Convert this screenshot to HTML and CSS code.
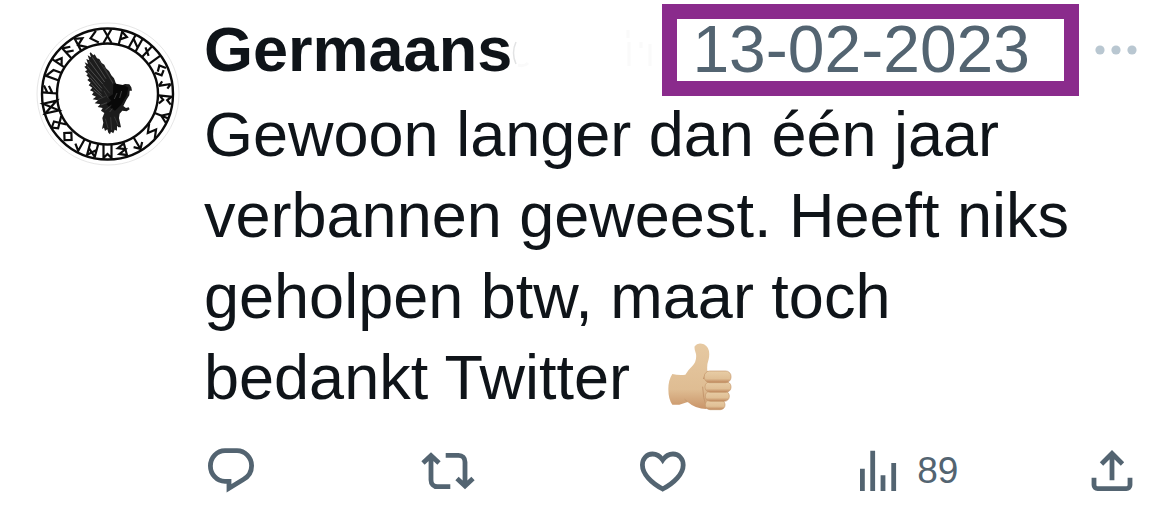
FILE: index.html
```html
<!DOCTYPE html>
<html lang="nl">
<head>
<meta charset="utf-8">
<meta name="viewport" content="width=device-width, initial-scale=1">
<title>Tweet</title>
<link rel="stylesheet" href="styles.css">
</head>
<body>
<article class="tweet">
  <svg class="avatar" viewBox="0 0 144 144" role="img" aria-label="Profielfoto">
    <circle cx="72" cy="72" r="71" fill="#fff" stroke="#e6e6e6" stroke-width="1"/>
    <g fill="none" stroke="#0b0b0b" stroke-width="2.400">
      <circle cx="71.500" cy="72" r="65.500"/>
      <circle cx="71.500" cy="72" r="50.500"/>
    </g>
    <g transform="translate(71.500 72)" fill="none" stroke="#0b0b0b" stroke-width="2.200">
      <path d="M-4-65L4-51M4-65L-4-51"/>
      <path transform="rotate(15)" d="M-2-65V-51M-2-64L4-60-2-56"/>
      <path transform="rotate(29)" d="M-4-65V-51M4-65V-51M-4-61L4-55"/>
      <path transform="rotate(43)" d="M0-65V-51M-4-60L4-56"/>
      <path transform="rotate(54)" d="M0-65V-51"/>
      <path transform="rotate(66)" d="M0-64L-5-59 0-55M1-61L5-57 0-52"/>
      <path transform="rotate(81)" d="M0-64V-52M0-64L4-60M0-52L-4-56"/>
      <path transform="rotate(96)" d="M-4-65V-51M-4-64L0-60 4-64M-4-52L0-56 4-52"/>
      <path transform="rotate(112)" d="M0-65V-51M-5-65L0-58 5-65"/>
      <path transform="rotate(130)" d="M4-65L-4-60 4-56-4-51"/>
      <path transform="rotate(149)" d="M0-65V-51M-5-59L0-64 5-59"/>
      <path transform="rotate(165)" d="M-3-65V-51M-3-64L4-61-3-58 4-55-3-52"/>
      <path transform="rotate(180)" d="M-4-65V-51M4-65V-51M-4-64L0-60 4-64"/>
      <path transform="rotate(195)" d="M-4-65V-51M4-65V-51M-4-64L4-57M4-64L-4-57"/>
      <path transform="rotate(209)" d="M-2-65V-51M-2-64L4-59"/>
      <path transform="rotate(223)" d="M0-63L5-58 0-53-5-58Z"/>
      <path transform="rotate(239)" d="M-5-51L4-60 0-65-4-60 5-51"/>
      <path transform="rotate(257)" d="M-5-65V-51L5-65V-51Z"/>
      <path transform="rotate(274)" d="M-3-65V-51M-3-60L4-64M-3-55L4-59"/>
      <path transform="rotate(290)" d="M-4-51V-64L4-59V-51"/>
      <path transform="rotate(304)" d="M-2-65V-51M-2-62L4-58-2-54"/>
      <path transform="rotate(318)" d="M-3-65V-51M-3-64L4-60M-3-59L4-55"/>
      <path transform="rotate(332)" d="M-3-65V-51M-3-64L4-61-3-57 4-51"/>
      <path transform="rotate(346)" d="M4-64L-3-58 4-52"/>
    </g>
    <g transform="translate(-6 -7) scale(.3333)">
      <path fill="#1c1c1c" d="M182 112L190 121 194 118 201 130 208 132 215 144 223 149 228 160 237 168 244 181 252 190 257 203 264 216 276 211 285 207 298 208 304 217 306 227 299 227 298 241 289 255 280 273 288 279 296 277 299 283 290 289 277 287 269 296 267 309 273 337 265 337 261 332 261 347 254 344 250 355 243 350 240 358 235 353 232 343 225 348 222 338 216 342 220 323 217 309 223 294 213 287 218 279 203 276 211 268 194 265 204 256 188 253 198 245 186 239 191 231 180 226 187 218 176 211 182 203 172 195 178 190 169 181 174 177 165 169 172 165 163 155 169 152 164 142 174 147 169 132 178 136 173 121 183 127 179 115Z"/>
      <g fill="none" stroke="#666" stroke-width="2">
        <path d="M187 127L228 191M178 139L224 201M172 154L219 208M174 171L216 220M180 188L215 229M184 207L214 239M191 225L218 247"/>
        <path stroke="#444" d="M207 137L248 203M222 155L252 211M220 211L239 235M222 227L235 250M203 254L227 244M226 311L234 339M242 307L245 346M253 305L264 330"/>
      </g>
      <path fill="#080808" d="M250 205L283 211 295 218 290 241 273 270 255 287 239 276 229 268 244 257 235 247 249 238Z"/>
      <path fill="none" stroke="#555" stroke-width="2" d="M213 270l18-7M226 285l18-14M239 291l8-10M275 228l-6 21M261 234l-8 18"/>
    </g>
  </svg>

  <div class="content">
    <header class="head">
      <span class="name">Germaans</span>
      <svg class="smudge" viewBox="0 0 150 56" preserveAspectRatio="xMinYMid meet" aria-hidden="true">
        <path d="M4 20Q-1 31 4 42" fill="none" stroke="#e2e3e4" stroke-width="1.500"/>
        <path d="M6 43q6 2 10-2M116 8v8M117 20v24M129 20v6M138 22v22" fill="none" stroke="#fafafa" stroke-width="3"/>
      </svg>
      <time class="date" datetime="2023-02-13">13-02-2023</time>
      <button class="more" type="button" aria-label="Meer">
        <svg viewBox="0 0 48 12" aria-hidden="true"><circle cx="8" cy="6" r="4.600"/><circle cx="24" cy="6" r="4.600"/><circle cx="40" cy="6" r="4.600"/></svg>
      </button>
    </header>

    <p class="text">Gewoon langer dan één jaar verbannen geweest. Heeft niks geholpen btw, maar toch bedankt Twitter <svg class="thumb" viewBox="42 38 192 202" role="img" aria-label="Duim omhoog">
      <defs>
        <linearGradient id="skin" x1="0" y1="0" x2="0" y2="1"><stop offset="0" stop-color="#e6c9a2"/><stop offset=".7" stop-color="#dfbd93"/><stop offset="1" stop-color="#c99468"/></linearGradient>
        <linearGradient id="finger" x1="0" y1="0" x2="0" y2="1"><stop offset="0" stop-color="#e8cda6"/><stop offset=".65" stop-color="#e0bf95"/><stop offset="1" stop-color="#bd8459"/></linearGradient>
      </defs>
      <path fill="url(#skin)" d="M55 130Q43 148 43 175 43 206 55 222L76 222 101 214Q125 235 157 235L182 190 178 130 160 120Q158 103 164 86 171 52 150 41 131 34 122 47 120 54 126 70 129 91 115 106 104 116 94 132Q74 134 55 130Z"/>
      <path fill="none" stroke="#c5986e" stroke-width="3" d="M148 145q4-17 14-22M146 168q0 31 12 65M100 213l-8-7"/>
      <g fill="url(#finger)" stroke="#c6986d" stroke-width="2">
        <rect x="154" y="208" width="59" height="29" rx="14"/>
        <rect x="154" y="181" width="72" height="31" rx="15"/>
        <rect x="153" y="153" width="78" height="32" rx="15"/>
        <rect x="151" y="121" width="80" height="35" rx="16"/>
      </g>
    </svg></p>

    <footer class="actions">
      <button class="action" type="button" aria-label="Beantwoorden">
        <svg class="icon" viewBox="0 0 56 56" aria-hidden="true"><path d="M22 8.700h12c8 0 14.600 6.800 14.600 15 0 6-3.400 11-8.300 13.800L26 46.200V39.300h-4C13.700 39.300 7.400 32 7.400 24 7.400 15.300 14 8.700 22 8.700z"/></svg>
      </button>
      <button class="action" type="button" aria-label="Retweeten">
        <svg class="icon" viewBox="0 0 56 56" aria-hidden="true"><path d="M4 21l8-7.500 8 7.500M12 14v24c0 3.800 2.600 6.700 6.500 6.700h12.800M26.700 13.300h12.800c3.900 0 6.500 3 6.500 6.700v24M38 36.500l8 7.500 8-7.500"/></svg>
      </button>
      <button class="action" type="button" aria-label="Vind ik leuk">
        <svg class="icon" viewBox="0 0 56 56" aria-hidden="true"><path d="M27.700 18C24 12.700 20 12 17.500 12 11.500 12 7.400 17 7.400 23c0 9 9 18 20.300 24C39 41 48.200 32 48.200 23c0-6-4.200-11-10.200-11-2.500 0-6.600.7-10.300 6z"/></svg>
      </button>
      <button class="action" type="button" aria-label="89 weergaven">
        <svg class="icon" viewBox="0 0 56 56" aria-hidden="true"><path d="M11.400 26.700V49M21.700 8.700V49M32 33.300V49M42.700 21V49"/></svg>
        <span class="count">89</span>
      </button>
      <button class="action" type="button" aria-label="Delen">
        <svg class="icon" viewBox="0 0 56 56" aria-hidden="true"><path d="M17.500 22L28 11.500 38.500 22M28 12v26.300M10 35.700v7.300c0 2 1.500 3.600 3.600 3.600h28.800c2.100 0 3.600-1.600 3.600-3.600v-7.300"/></svg>
      </button>
    </footer>
  </div>
</article>
</body>
</html>
```
FILE: styles.css
```css
* {
  box-sizing: border-box;
}

body {
  margin: 0;
  background: #fff;
  color: #0f1419;
  font-family: "Liberation Sans", Arial, sans-serif;
}

button {
  padding: 0;
  border: 0;
  background: none;
  color: inherit;
  font: inherit;
  cursor: pointer;
}

.tweet {
  display: flex;
  align-items: flex-start;
  gap: 24px;
  padding: 4px 30px 24px 36px;
}

.avatar {
  flex: none;
  width: 144px;
  height: 144px;
  margin-top: 18px;
}

.content {
  flex: 1;
  min-width: 0;
}

.head {
  display: flex;
  align-items: center;
  font-size: 63px;
  line-height: 60px;
}

.name {
  padding-bottom: 2px;
  font-weight: 700;
}

.smudge {
  flex: 1;
  min-width: 0;
  height: 56px;
}

.date {
  padding: 0 34px 2px 15px;
  border: 15px solid #8a2b8c;
  color: #536471;
  font-size: 66px;
  white-space: nowrap;
}

.more {
  display: flex;
  width: 48px;
  margin-left: 13px;
  fill: #b9c7d1;
}

.more svg {
  width: 48px;
  height: 12px;
}

.text {
  margin: -2px 0 0;
  padding-right: 40px;
  font-size: 63px;
  line-height: 81px;
}

.thumb {
  width: 64px;
  height: 68px;
  margin-left: 20px;
  vertical-align: -12px;
}

.actions {
  display: grid;
  grid-template-columns: 13fr 13fr 13fr 14fr 56px;
  margin: 23px 0 0 -1px;
  color: #536471;
}

.action {
  display: flex;
  align-items: center;
  justify-self: start;
}

.icon {
  width: 56px;
  height: 56px;
  fill: none;
  stroke: currentColor;
  stroke-width: 4.8;
}

.count {
  padding-top: 2px;
  margin-left: 10px;
  font-size: 37px;
  line-height: 56px;
}
```
